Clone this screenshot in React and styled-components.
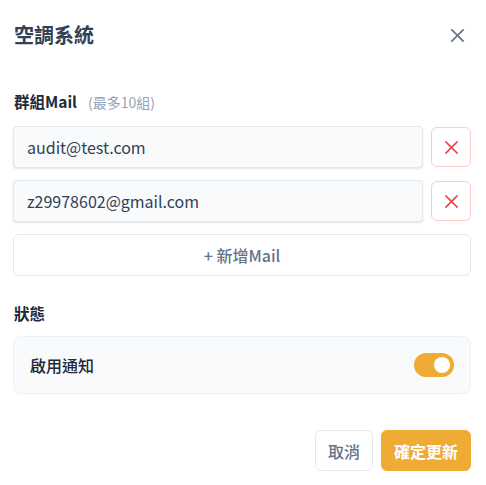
import React, { useState } from 'react';
import styled, { createGlobalStyle } from 'styled-components';

const GlobalStyle = createGlobalStyle`
  html, body { margin: 0; padding: 0; background: #ffffff; }
  body {
    font-family: "Noto Sans CJK TC", "Noto Sans", sans-serif;
    color: #334155;
  }
  * { box-sizing: border-box; }
`;

const Dialog = styled.div`
  width: 486px;
  padding: 22px 15px 14px 13px;
  display: flex;
  flex-direction: column;
`;

const Header = styled.div`
  display: flex;
  justify-content: space-between;
  align-items: center;
  height: 26px;
  margin-bottom: 42px;
`;

const Title = styled.h2`
  margin: 0 0 0 1px;
  font-size: 20px;
  font-weight: 700;
  color: #334155;
  line-height: 26px;
`;

const CloseButton = styled.button`
  border: none;
  background: none;
  padding: 0;
  width: 20px;
  height: 20px;
  display: flex;
  align-items: center;
  justify-content: center;
  color: #64748b;
  margin-right: 4px;
`;

const Label = styled.div`
  display: flex;
  align-items: baseline;
  gap: 11px;
  font-size: 15.5px;
  font-weight: 700;
  color: #1e293b;
  margin: 0 0 ${({ $gap }) => $gap || 13}px 1px;
  line-height: 22px;
`;

const Hint = styled.span`
  font-size: 14px;
  font-weight: 400;
  color: #94a3b8;
`;

const MailList = styled.div`
  display: flex;
  flex-direction: column;
  gap: 12px;
`;

const MailRow = styled.div`
  display: flex;
  align-items: center;
  gap: 8px;
`;

const MailInput = styled.input`
  flex: 1;
  height: 42px;
  border: 1px solid #e2e8f0;
  border-radius: 4px;
  background: #f8fafc;
  box-shadow: 0 1px 2px rgba(15, 23, 42, 0.12);
  padding: 0 13px;
  font-family: inherit;
  font-size: 16px;
  color: #334155;
  outline: none;
`;

const DeleteButton = styled.button`
  width: 40px;
  height: 40px;
  border: 1px solid #fecaca;
  border-radius: 6px;
  background: #ffffff;
  color: #ef4444;
  display: flex;
  align-items: center;
  justify-content: center;
  padding: 0;
`;

const AddButton = styled.button`
  height: 42px;
  margin-top: 12px;
  border: 1px solid #e2e8f0;
  border-radius: 6px;
  background: #ffffff;
  font-family: inherit;
  font-size: 16px;
  font-weight: 500;
  color: #64748b;
`;

const Section = styled.div`
  margin-top: 26px;
`;

const ToggleCard = styled.div`
  height: 58px;
  border: 1px solid #eef2f7;
  border-radius: 8px;
  background: #f8fafc;
  display: flex;
  align-items: center;
  justify-content: space-between;
  padding: 0 16px;
`;

const ToggleText = styled.span`
  font-size: 16px;
  font-weight: 500;
  color: #1e293b;
`;

const Switch = styled.button`
  width: 40px;
  height: 24px;
  border: none;
  border-radius: 12px;
  padding: 0 4px;
  background: ${({ $on }) => ($on ? '#f0ab35' : '#cbd5e1')};
  display: flex;
  align-items: center;
  justify-content: ${({ $on }) => ($on ? 'flex-end' : 'flex-start')};
`;

const Knob = styled.span`
  width: 16px;
  height: 16px;
  border-radius: 50%;
  background: #ffffff;
`;

const Footer = styled.div`
  display: flex;
  justify-content: flex-end;
  gap: 8px;
  margin-top: 36px;
`;

const FooterButton = styled.button`
  height: 41px;
  padding: 0 12px;
  border-radius: 6px;
  border: 1px solid ${({ $primary }) => ($primary ? '#f0ab35' : '#e2e8f0')};
  background: ${({ $primary }) => ($primary ? '#f0ab35' : '#ffffff')};
  color: ${({ $primary }) => ($primary ? '#ffffff' : '#64748b')};
  font-family: inherit;
  font-size: 16px;
  font-weight: ${({ $primary }) => ($primary ? 700 : 500)};
`;

const Cross = ({ size, width }) => (
  <svg width={size} height={size} viewBox="0 0 24 24" fill="none" stroke="currentColor" strokeWidth={width} strokeLinecap="round">
    <path d="M4 4L20 20M20 4L4 20" />
  </svg>
);

export default function App() {
  const [mails] = useState(['audit@test.com', 'z29978602@gmail.com']);
  const [on, setOn] = useState(true);

  return (
    <>
      <GlobalStyle />
      <Dialog>
        <Header>
          <Title>空調系統</Title>
          <CloseButton aria-label="close">
            <Cross size={17} width={2.4} />
          </CloseButton>
        </Header>

        <Label>
          群組Mail <Hint>(最多10組)</Hint>
        </Label>
        <MailList>
          {mails.map((m) => (
            <MailRow key={m}>
              <MailInput defaultValue={m} />
              <DeleteButton aria-label="remove">
                <Cross size={17} width={2.2} />
              </DeleteButton>
            </MailRow>
          ))}
        </MailList>
        <AddButton>+ 新增Mail</AddButton>

        <Section>
          <Label $gap={12}>狀態</Label>
          <ToggleCard>
            <ToggleText>啟用通知</ToggleText>
            <Switch $on={on} onClick={() => setOn(!on)}>
              <Knob />
            </Switch>
          </ToggleCard>
        </Section>

        <Footer>
          <FooterButton>取消</FooterButton>
          <FooterButton $primary>確定更新</FooterButton>
        </Footer>
      </Dialog>
    </>
  );
}
